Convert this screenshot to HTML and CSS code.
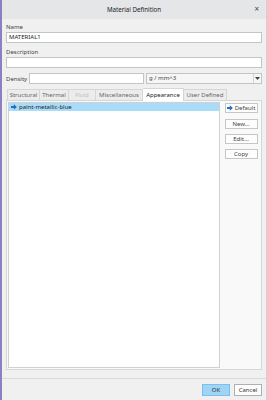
FILE: index.html
```html
<!DOCTYPE html>
<html>
<head>
<meta charset="utf-8">
<link rel="stylesheet" href="styles.css">
</head>
<body>
<div class="window">
  <div class="titlebar">
    <span class="title">Material Definition</span>
    <span class="close">×</span>
  </div>
  <div class="content">
    <div class="label first">Name</div>
    <div class="input">MATERIAL1</div>
    <div class="label">Description</div>
    <div class="input"></div>
    <div class="density-row">
      <span class="dlabel">Density</span>
      <div class="input dinput"></div>
      <div class="select">
        <span class="sel-text">g / mm^3</span>
        <span class="sel-arrow"><svg width="5" height="3" viewBox="0 0 5 3"><path d="M0 0H5L2.5 3Z" fill="#444"/></svg></span>
      </div>
    </div>
    <div class="tabs">
      <div class="tab t1">Structural</div>
      <div class="tab t2">Thermal</div>
      <div class="tab t3 disabled">Fluid</div>
      <div class="tab t4">Miscellaneous</div>
      <div class="tab t5 active">Appearance</div>
      <div class="tab t6">User Defined</div>
    </div>
    <div class="panel">
      <div class="list">
        <div class="row selected">
          <svg class="arrow" width="6" height="6" viewBox="0 0 6 6"><path d="M0 2H2.8V0.2L5.9 3L2.8 5.8V4H0Z" fill="#1f6fc4"/></svg>
          <span>paint-metallic-blue</span>
        </div>
      </div>
      <div class="buttons">
        <div class="btn"><svg class="arrow" width="6" height="6" viewBox="0 0 6 6"><path d="M0 2H2.8V0.2L5.9 3L2.8 5.8V4H0Z" fill="#1f6fc4"/></svg>Default</div>
        <div class="btn">New...</div>
        <div class="btn">Edit...</div>
        <div class="btn">Copy</div>
      </div>
    </div>
  </div>
  <div class="footer">
    <div class="fbtn ok">OK</div>
    <div class="fbtn cancel">Cancel</div>
  </div>
</div>
</body>
</html>
```
FILE: styles.css
```css
* { box-sizing: border-box; }
html, body { margin: 0; padding: 0; }
body {
  width: 267px;
  height: 400px;
  overflow: hidden;
  background: #f0f0f0;
  font-family: "Noto Sans", "Open Sans", sans-serif;
  font-size: 6px;
  color: #333;
}
.window {
  width: 267px;
  height: 400px;
  border-left: 2px solid #8d80c2;
  border-right: 1px solid #d0d0d0;
  display: flex;
  flex-direction: column;
  background: #f0f0f0;
}
.titlebar {
  height: 19px;
  flex: none;
  background: #e4e6e8;
  display: flex;
  align-items: center;
  justify-content: center;
  position: relative;
  color: #222;
  font-size: 6.2px;
}
.close {
  position: absolute;
  right: 7px;
  top: 5px;
  font-size: 8px;
  line-height: 8px;
  color: #444;
}
.content {
  padding: 4px 4px 0 4px;
  display: flex;
  flex-direction: column;
  flex: 1;
}
.label {
  height: 8px;
  line-height: 8px;
  margin-top: 5px;
  margin-bottom: 1px;
  color: #444;
}
.label.first { margin-top: 0; }
.input {
  height: 11px;
  background: #fff;
  border: 1px solid #c4c4c4;
  line-height: 9px;
  padding-left: 2px;
  color: #222;
  width: 256px;
}
.density-row {
  display: flex;
  align-items: center;
  margin-top: 5px;
  height: 11px;
}
.dlabel {
  width: 23px;
  color: #444;
}
.dinput { width: 115px; }
.select {
  margin-left: 2px;
  width: 116px;
  height: 11px;
  background: #f6f6f6;
  border: 1px solid #c4c4c4;
  display: flex;
  align-items: center;
}
.sel-text {
  flex: 1;
  padding-left: 2px;
  color: #444;
  line-height: 9px;
}
.sel-arrow {
  width: 8px;
  height: 9px;
  border-left: 1px solid #d4d4d4;
  display: flex;
  align-items: center;
  justify-content: center;
}
.tabs {
  display: flex;
  margin-top: 5px;
  height: 11px;
  align-items: flex-end;
  padding-left: 1px;
}
.tab {
  height: 11px;
  line-height: 10px;
  text-align: center;
  background: #ececec;
  border: 1px solid #d6d6d6;
  border-bottom: none;
  border-left: none;
  color: #666;
}
.tab.t1 { width: 33px; border-left: 1px solid #d6d6d6; }
.tab.t2 { width: 29px; }
.tab.t3 { width: 27px; }
.tab.t4 { width: 47px; }
.tab.t5 { width: 41px; }
.tab.t6 { width: 43px; }
.tab.disabled { color: #c0c0c0; }
.tab.active {
  background: #fff;
  color: #222;
  height: 13px;
  line-height: 12px;
  margin-bottom: -1px;
  position: relative;
  z-index: 1;
}
.panel {
  height: 270px;
  width: 256px;
  background: #f9f9f9;
  border: 1px solid #d6d6d6;
  display: flex;
  padding: 1px 0 1px 1px;
}
.list {
  width: 212px;
  height: 100%;
  background: #fff;
  border: 1px solid #d0d0d0;
  padding: 0;
}
.row {
  height: 8px;
  display: flex;
  align-items: center;
  padding-left: 2px;
  line-height: 8px;
  color: #222;
}
.row.selected { background: #a9dcf8; }
.arrow { margin-right: 2px; flex: none; }
.buttons {
  flex: 1;
  display: flex;
  flex-direction: column;
  align-items: center;
  padding-top: 1px;
  gap: 5px;
}
.btn {
  width: 33px;
  height: 10px;
  border: 1px solid #c6c6c6;
  background: #fdfdfd;
  display: flex;
  align-items: center;
  justify-content: center;
  color: #444;
  line-height: 8px;
  margin-left: 1px;
}
.btn:first-child { margin-bottom: 1px; }
.footer {
  height: 22px;
  flex: none;
  border-top: 1px solid #dadada;
  display: flex;
  justify-content: flex-end;
  align-items: flex-start;
  padding: 5px 4px 0 0;
  gap: 4px;
  margin-bottom: 0;
}
.fbtn {
  width: 28px;
  height: 12px;
  display: flex;
  align-items: center;
  justify-content: center;
  color: #333;
}
.fbtn.ok {
  background: #9fd4f6;
  border: 1px solid #7cc0ee;
}
.fbtn.cancel {
  background: #fdfdfd;
  border: 1px solid #b0b0b0;
}
```
